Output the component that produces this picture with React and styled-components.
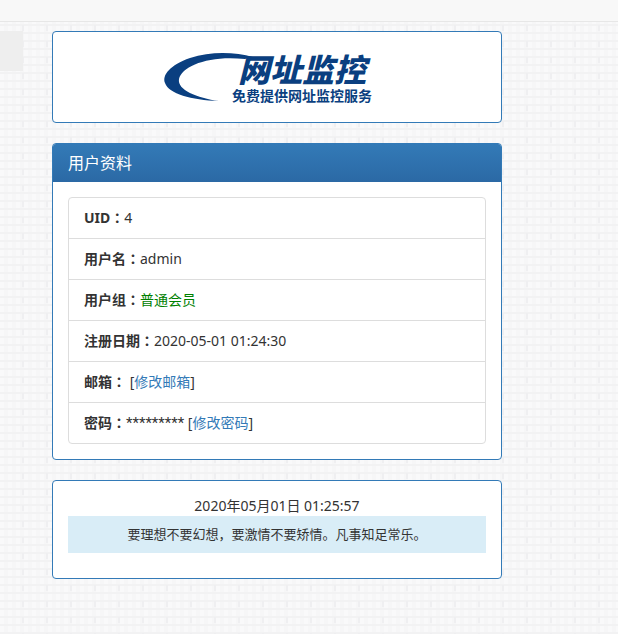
import styled, { createGlobalStyle } from "styled-components";

const rows = [
  { label: "UID", value: "4" },
  { label: "用户名", value: "admin" },
  { label: "用户组", value: "普通会员", green: true },
  { label: "注册日期", value: "2020-05-01 01:24:30" },
  { label: "邮箱", value: " ", link: "修改邮箱" },
  { label: "密码", value: "*********", masked: true, link: "修改密码" },
];

const App = () => {
  return <>
    <GlobalStyle />
    <Navbar />
    <Page>
      <Sidebar />
      <Content>
        <Panel>
          <PanelBody>
            <Logo viewBox="0 0 232 60" role="img" aria-label="网址监控">
              <path d="M92 10C74 5 50 4 29 11C9 18 1 28 4 36C8 47 30 53 58 54C36 51 16 43 18 32C21 19 48 8 84 12Z" />
              <text className="name" x="77" y="35">网址监控</text>
              <text className="slogan" x="71" y="54">免费提供网址监控服务</text>
            </Logo>
          </PanelBody>
        </Panel>
        <Panel>
          <PanelHeading>用户资料</PanelHeading>
          <PanelBody>
            <InfoList>
              {rows.map((row) => (
                <InfoRow key={row.label}>
                  <Label>{row.label}<Colon>：</Colon></Label>
                  {row.masked ? <Mask>{row.value}</Mask> : <Value $green={row.green}>{row.value}</Value>}
                  {row.masked && " "}
                  {row.link && <>[<Link href="#">{row.link}</Link>]</>}
                </InfoRow>
              ))}
            </InfoList>
          </PanelBody>
        </Panel>
        <Panel>
          <PanelBody>
            <Clock>2020年05月01日 01:25:57</Clock>
            <Motto>要理想不要幻想，要激情不要矫情。凡事知足常乐。</Motto>
          </PanelBody>
        </Panel>
      </Content>
    </Page>
  </>
};

/* woven backdrop: short darker stitches every 24px over a pale 8px weave */
const GlobalStyle = createGlobalStyle`
  * {
    box-sizing: border-box;
  }
  body {
    margin: 0;
    min-height: 100vh;
    font: 14px/20px "Noto Sans", "Noto Sans CJK SC", sans-serif;
    color: #333;
    background-color: #f6f6f7;
    background-image:
      radial-gradient(ellipse 1px 4px at 23px 12px, #efeff1 90%, transparent 100%),
      linear-gradient(#f2f2f3 2px, transparent 2px),
      linear-gradient(90deg, #f9f9fa 4px, transparent 4px);
    background-size: 24px 16px, 8px 8px, 8px 8px;
  }
`;

const Navbar = styled.nav`
  height: 22px;
  background: #f8f8f8;
  border-bottom: 1px solid #e7e7e7;
`;

const Page = styled.div`
  display: flex;
  align-items: flex-start;
  gap: 29px;
  padding: 9px 116px 20px 0;
`;

const Sidebar = styled.aside`
  width: 23px;
  height: 40px;
  background: #eee;
`;

const Content = styled.main`
  flex: 1;
  display: flex;
  flex-direction: column;
  gap: 20px;
`;

const Panel = styled.section`
  background: #fff;
  border: 1px solid #337ab7;
  border-radius: 4px;
`;

const PanelHeading = styled.h3`
  margin: 0;
  padding: 9px 15px;
  font-size: 16px;
  font-weight: 400;
  line-height: 20px;
  color: #fff;
  background: linear-gradient(#337ab7, #2b69a5);
  border-radius: 3px 3px 0 0;
`;

const PanelBody = styled.div`
  padding: 15px;
`;

const Logo = styled.svg`
  display: block;
  width: 232px;
  height: 60px;
  margin: 0 auto;
  overflow: visible;
  fill: #0a3f80;

  .name {
    font-size: 32px;
    font-weight: 900;
    font-style: italic;
  }
  .slogan {
    font-size: 14px;
    font-weight: 700;
  }
`;

const InfoList = styled.ul`
  margin: 0;
  padding: 0;
  list-style: none;
  border: 1px solid #ddd;
  border-radius: 4px;
`;

const InfoRow = styled.li`
  padding: 10px 15px;
  white-space: pre;

  & + & {
    border-top: 1px solid #ddd;
  }
`;

const Label = styled.b`
  font-weight: 700;
`;

/* the JP face centres the full-width colon */
const Colon = styled.span`
  font-family: "Noto Sans", "Noto Sans CJK JP", sans-serif;
`;

const Value = styled.span`
  color: ${({ $green }) => ($green ? "green" : "inherit")};
`;

const Mask = styled.span`
  font-family: Roboto, "Noto Sans", sans-serif;
  font-size: 15px;
  line-height: 1;
`;

const Link = styled.a`
  color: #337ab7;
  text-decoration: none;
`;

const Clock = styled.div`
  text-align: center;
`;

const Motto = styled.p`
  margin: 0 0 10px;
  padding: 8px 15px;
  font-size: 13px;
  line-height: 21px;
  text-align: center;
  background: #d9edf7;
`;

export default App;
